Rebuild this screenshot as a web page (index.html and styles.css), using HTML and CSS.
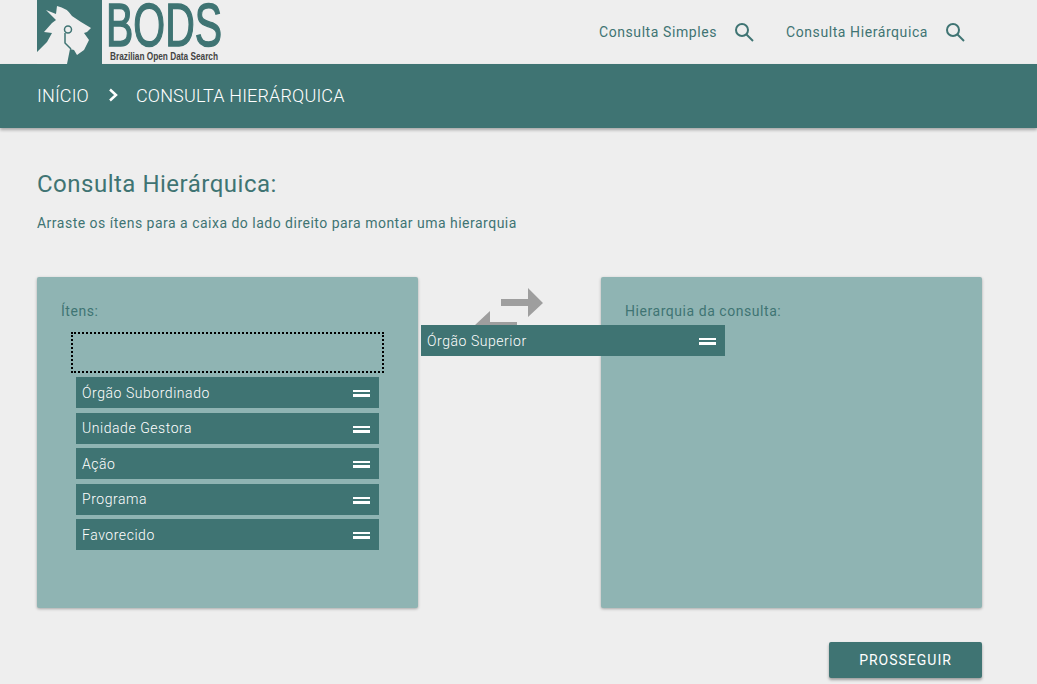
FILE: index.html
```html
<!DOCTYPE html>
<html lang="pt-BR">
<head>
    <meta charset="UTF-8">
    <title>BODS - Consulta Hierárquica</title>
    <link rel="stylesheet" href="styles.css">
</head>
<body>

    <!-- Top Bar -->
    <header class="topbar">
        <svg class="logo" width="187" height="64" viewBox="0 0 187 64">
            <rect class="logo-mark" width="65" height="64"/>
            <path class="logo-goat" d="M9 10L19 14L20 6Q30 8 35 16L44 22L54 28L50 32L47 33L52 40L47 50L40 55L37 50L33 49L30 64H0V52L10 42L15 33L7 32L15 23L19 20Z"/>
            <circle class="logo-lens" cx="31" cy="29.500" r="3.500"/>
            <path class="logo-lens" d="M28 33V43L34 49"/>
            <text class="logo-name" x="69" y="46" textLength="116" lengthAdjust="spacingAndGlyphs">BODS</text>
            <text class="logo-sub" x="73" y="60" textLength="108" lengthAdjust="spacingAndGlyphs">Brazilian Open Data Search</text>
        </svg>
        <nav class="nav">
            <a class="nav-link">Consulta Simples
                <svg width="20" height="20" viewBox="0 0 20 20"><circle cx="8" cy="8" r="6"/><path d="M12.500 12.500L19 19"/></svg>
            </a>
            <a class="nav-link">Consulta Hierárquica
                <svg width="20" height="20" viewBox="0 0 20 20"><circle cx="8" cy="8" r="6"/><path d="M12.500 12.500L19 19"/></svg>
            </a>
        </nav>
    </header>

    <!-- Breadcrumb -->
    <div class="breadcrumb">
        <span>INÍCIO</span>
        <svg width="11" height="14" viewBox="0 0 11 14"><path d="M3 1.500L9 7L3 12.500"/></svg>
        <span>CONSULTA HIERÁRQUICA</span>
    </div>

    <!-- Main Content -->
    <main class="content">
        <h1 class="title">Consulta Hierárquica:</h1>
        <p class="subtitle">Arraste os ítens para a caixa do lado direito para montar uma hierarquia</p>

        <div class="board">
            <section class="card">
                <h2 class="card-title">Ítens:</h2>
                <div class="placeholder"></div>
                <ul class="item-list">
                    <li class="item">Órgão Subordinado<span class="handle"></span></li>
                    <li class="item">Unidade Gestora<span class="handle"></span></li>
                    <li class="item">Ação<span class="handle"></span></li>
                    <li class="item">Programa<span class="handle"></span></li>
                    <li class="item">Favorecido<span class="handle"></span></li>
                </ul>
            </section>

            <svg class="swap" width="68" height="52" viewBox="0 0 68 52">
                <path d="M26 11H53V0L68 15L53 29V18H26Z"/>
                <path d="M42 34H15V23L0 37L15 52V41H42Z"/>
            </svg>

            <section class="card">
                <h2 class="card-title">Hierarquia da consulta:</h2>
            </section>
        </div>

        <div class="actions">
            <button class="btn">PROSSEGUIR</button>
        </div>
    </main>

    <!-- Item being dragged -->
    <div class="item item-dragging">Órgão Superior<span class="handle"></span></div>

</body>
</html>
```

FILE: styles.css
```css
* {
    box-sizing: border-box;
    margin: 0;
    padding: 0;
}
body {
    height: 684px;
    overflow: hidden;
    font-family: Roboto, 'Liberation Sans', sans-serif;
    font-weight: 300;
    background-color: #eeeeee;
    color: #3f7473;
}
.topbar {
    height: 64px;
    padding-left: 37px;
    padding-right: 72px;
    display: flex;
    align-items: center;
    justify-content: space-between;
}
.logo {
    display: block;
}
.logo-mark {
    fill: #3f7473;
}
.logo-goat {
    fill: #eeeeee;
}
.logo-lens {
    fill: none;
    stroke: #3f7473;
    stroke-width: 1.500;
}
.logo-name {
    font-family: 'Liberation Sans', sans-serif;
    font-weight: normal;
    font-size: 62px;
    fill: #3f7473;
    stroke: #3f7473;
    stroke-width: 1.500;
}
.logo-sub {
    font-family: 'Liberation Sans', sans-serif;
    font-weight: bold;
    font-size: 10px;
    fill: #444444;
}
.nav {
    display: flex;
    gap: 32px;
}
.nav-link {
    display: flex;
    align-items: center;
    gap: 17px;
    font-size: 14px;
    font-weight: 400;
    letter-spacing: 0.58px;
}
.nav-link svg {
    fill: none;
    stroke: #3f7473;
    stroke-width: 2;
}
.breadcrumb {
    height: 64px;
    padding-left: 37px;
    padding-bottom: 2px;
    display: flex;
    align-items: center;
    gap: 18px;
    background-color: #3f7473;
    color: #ffffff;
    font-size: 18px;
    letter-spacing: 0.15px;
    box-shadow: 0 2px 3px rgba(0, 0, 0, 0.3);
}
.breadcrumb svg {
    fill: none;
    stroke: #ffffff;
    stroke-width: 2.500;
}
.content {
    padding: 40px 55px 0 37px;
}
.title {
    font-size: 24px;
    font-weight: 400;
    letter-spacing: 0.5px;
    line-height: 32px;
}
.subtitle {
    margin-top: 13px;
    font-size: 14px;
    font-weight: 400;
    letter-spacing: 0.49px;
    line-height: 20px;
}
.board {
    margin-top: 44px;
    display: flex;
    justify-content: space-between;
    align-items: flex-start;
}
.card {
    width: 381px;
    height: 331px;
    padding: 26px 24px;
    background-color: #8fb4b3;
    border-radius: 2px;
    box-shadow: 0 1px 3px rgba(0, 0, 0, 0.3);
}
.card-title {
    font-size: 14px;
    font-weight: 400;
    letter-spacing: 0.55px;
    line-height: 16px;
}
.swap {
    margin: 11px 1px 0 0;
    fill: #9e9e9e;
}
.placeholder {
    width: 313px;
    height: 41px;
    margin: 13px 0 4px 10px;
    border: 2px dotted #000000;
}
.item-list {
    list-style: none;
    margin-left: 15px;
    width: 303px;
    display: flex;
    flex-direction: column;
    gap: 4.500px;
}
.item {
    height: 31px;
    padding: 0 9px 0 6px;
    display: flex;
    align-items: center;
    justify-content: space-between;
    background-color: #3f7473;
    color: #ffffff;
    font-size: 14px;
    letter-spacing: 0.55px;
}
.handle {
    width: 17px;
    height: 7px;
    margin-top: 2px;
    border-top: 2px solid #ffffff;
    border-bottom: 3px solid #ffffff;
}
.item-dragging {
    position: absolute;
    left: 421px;
    top: 325px;
    width: 304px;
}
.actions {
    margin-top: 34px;
    display: flex;
    justify-content: flex-end;
}
.btn {
    width: 153px;
    height: 36px;
    border: none;
    border-radius: 2px;
    background-color: #3f7473;
    color: #ffffff;
    font-family: inherit;
    font-size: 14px;
    font-weight: 400;
    letter-spacing: 1px;
    box-shadow: 0 2px 3px rgba(0, 0, 0, 0.35);
}
```
